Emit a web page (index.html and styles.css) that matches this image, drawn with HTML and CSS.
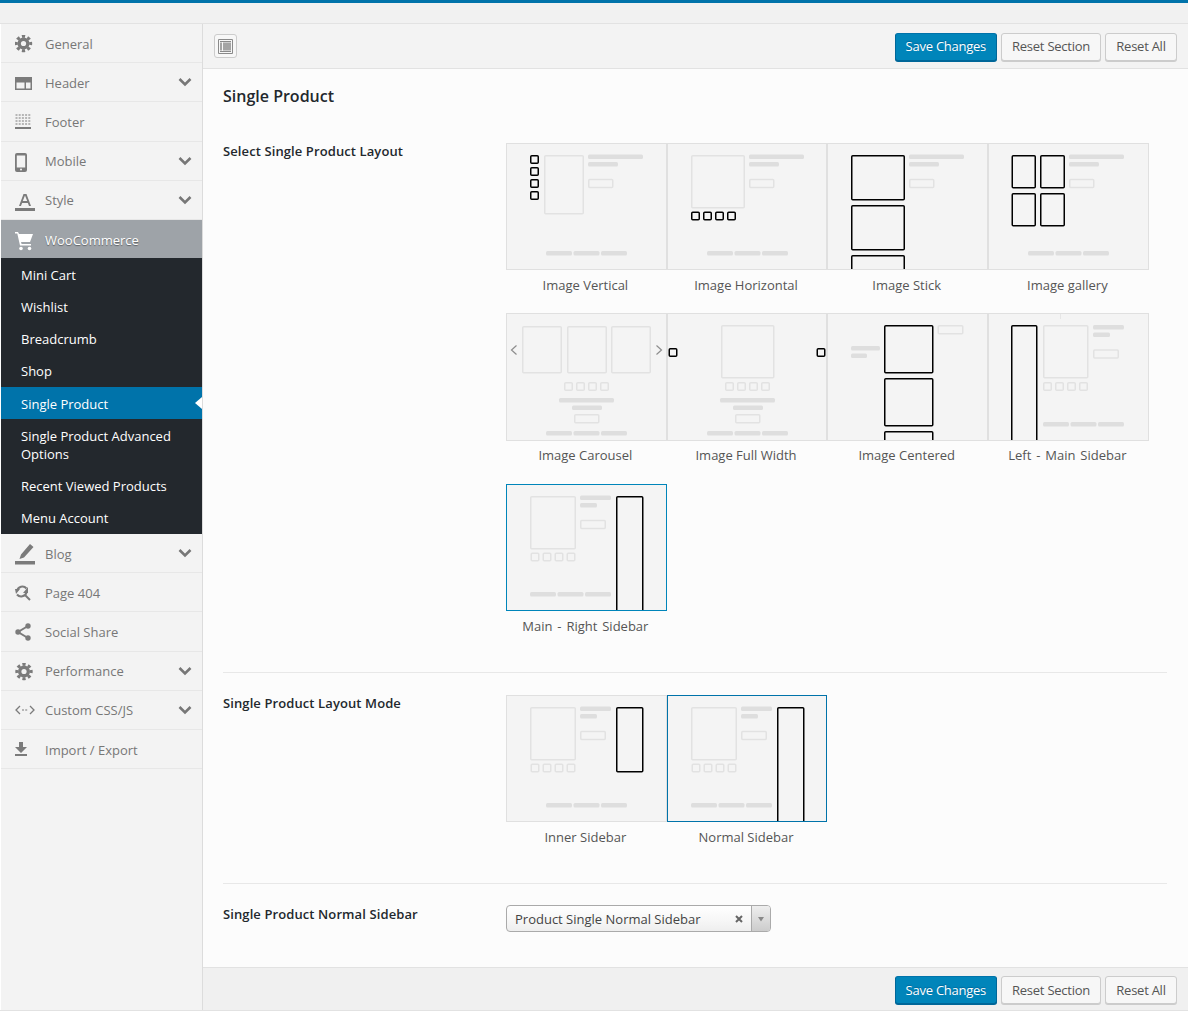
FILE: index.html
```html
<!DOCTYPE html>
<html lang="en">
<head>
<meta charset="utf-8">
<title>Theme Options</title>
<link rel="stylesheet" href="styles.css">
</head>
<body>
<svg class="defs" width="0" height="0" aria-hidden="true">
  <defs>
    <g id="foot"><rect class="ln" width="26" height="4.5"/><rect class="ln" x="27.5" width="26" height="4.5"/><rect class="ln" x="55" width="26" height="4.5"/></g>
    <g id="sq"><rect class="ol" x=".75" y=".75" width="7.5" height="7.5"/><rect class="ol" x="12.75" y=".75" width="7.5" height="7.5"/><rect class="ol" x="24.75" y=".75" width="7.5" height="7.5"/><rect class="ol" x="36.75" y=".75" width="7.5" height="7.5"/></g>
    <g id="info"><rect class="ln" width="55" height="4.5"/><rect class="ln" y="7.5" width="30" height="4.5"/><rect class="ol" x=".75" y="25" width="24" height="8"/></g>
    <g id="infos"><rect class="ln" width="31" height="4.5"/><rect class="ln" y="7.5" width="17" height="4.5"/><rect class="ol" x=".75" y="25" width="24.5" height="8"/></g>
    <g id="center"><rect class="ln" width="55" height="4.5"/><rect class="ln" x="13" y="7.5" width="30" height="4.5"/><rect class="ol" x="15.75" y="16.75" width="24" height="8"/></g>
    <g id="gear"><circle cx="0" cy="0" r="6" class="ic-f"/><circle cx="0" cy="0" r="7.2" class="ic-teeth" pathLength="48" stroke-dasharray="3.4 2.6" stroke-dashoffset="1.7"/><circle cx="0" cy="0" r="2.6" class="ic-hole"/></g>
  </defs>
</svg>
<div class="topbar"></div>
<div class="app">
  <nav class="sidebar">
    <a class="nav nav--low"><svg class="ico" viewBox="0 0 20 20"><use href="#gear" x="8.5" y="8.5"/></svg>General</a>
    <a class="nav nav--low has-sub"><svg class="ico" viewBox="0 0 20 20"><path class="ic-p" fill-rule="evenodd" d="M0 3h17v13H0zM1.500 8.500v6h8v-6zM11 8.500v6h4.500v-6z"/></svg>Header<svg class="chev" viewBox="0 0 14 10"><path d="M1.5 2L7 7.500 12.500 2"/></svg></a>
    <a class="nav nav--tall"><svg class="ico" viewBox="0 0 20 20"><path class="ic-dots" d="M.5 2H16M.5 5H16M.5 8H16M.5 11H16"/><path class="ic-p" d="M0 14h16v2H0z"/></svg>Footer</a>
    <a class="nav has-sub"><svg class="ico" viewBox="0 0 20 20"><path class="ic-p" fill-rule="evenodd" d="M2 0h8a2 2 0 0 1 2 2v15a2 2 0 0 1-2 2H2a2 2 0 0 1-2-2V2a2 2 0 0 1 2-2zM1.800 2.500v12h8.400v-12zM6 15.500a1 1 0 1 0 0 2 1 1 0 0 0 0-2z"/></svg>Mobile<svg class="chev" viewBox="0 0 14 10"><path d="M1.5 2L7 7.500 12.500 2"/></svg></a>
    <a class="nav has-sub"><svg class="ico ico--wide" viewBox="0 0 22 22"><path class="ic-p" fill-rule="evenodd" d="M8.500 3h3L16 15h-2l-1.100-3H7.100L6 15H4zM7.800 10h4.400L10 4.500zM0 17h20v3H0z"/></svg>Style<svg class="chev" viewBox="0 0 14 10"><path d="M1.5 2L7 7.500 12.500 2"/></svg></a>
    <a class="nav nav--active nav--low"><svg class="ico" viewBox="0 0 20 20"><path class="ic-w" d="M0 1h3l1 2h14l-3 8H6l.6 2H16v1.500H5L2.300 2.500H0z"/><circle class="ic-w" cx="6" cy="17.500" r="1.800"/><circle class="ic-w" cx="14.500" cy="17.500" r="1.800"/></svg>WooCommerce</a>
    <div class="subnav">
      <a class="sub">Mini Cart</a>
      <a class="sub">Wishlist</a>
      <a class="sub">Breadcrumb</a>
      <a class="sub">Shop</a>
      <a class="sub sub--active">Single Product</a>
      <a class="sub sub--long">Single Product Advanced Options</a>
      <a class="sub">Recent Viewed Products</a>
      <a class="sub">Menu Account</a>
    </div>
    <a class="nav nav--low has-sub"><svg class="ico ico--wide" viewBox="0 0 22 22"><path class="ic-p" d="M15 0l3.500 3L9 13.500 4.500 15 6 10.500zM0 17h20v3.500H0z"/></svg>Blog<svg class="chev" viewBox="0 0 14 10"><path d="M1.5 2L7 7.500 12.500 2"/></svg></a>
    <a class="nav nav--low"><svg class="ico" viewBox="0 0 20 20"><path class="ic-s ic-s--b" d="M2 7a5.500 5.500 0 0 1 9.500-2.500M11.500 8.500A5.500 5.500 0 0 1 2 10.500M10 11l5 5"/><path class="ic-p" d="M0 5h5L1 10zM13 3v6H8z"/></svg>Page 404</a>
    <a class="nav nav--tall"><svg class="ico" viewBox="0 0 20 20"><path class="ic-s ic-s--b" d="M13 3L3 9l10 6"/><circle class="ic-p" cx="13" cy="3" r="2.700"/><circle class="ic-p" cx="3" cy="9" r="2.700"/><circle class="ic-p" cx="13" cy="15" r="2.700"/></svg>Social Share</a>
    <a class="nav has-sub"><svg class="ico" viewBox="0 0 20 20"><use href="#gear" x="9" y="8.500"/></svg>Performance<svg class="chev" viewBox="0 0 14 10"><path d="M1.5 2L7 7.500 12.500 2"/></svg></a>
    <a class="nav has-sub"><svg class="ico ico--wide" viewBox="0 0 22 22"><path class="ic-s ic-s--thin" d="M5 5l-4 4 4 4M15 5l4 4-4 4"/><path class="ic-dots" d="M7 9h6"/></svg>Custom CSS/JS<svg class="chev" viewBox="0 0 14 10"><path d="M1.5 2L7 7.500 12.500 2"/></svg></a>
    <a class="nav nav--low"><svg class="ico" viewBox="0 0 20 20"><path class="ic-p" d="M4 1h4v5h4L6 12 0 6h4zM0 13h12v2H0z"/></svg>Import / Export</a>
  </nav>
  <main class="main">
    <header class="bar bar--top">
      <button class="expand" aria-label="Expand"><svg viewBox="0 0 15 15" width="15" height="15"><path class="exp-line" d="M.5.500h14v14H.5zM2 2.500h11M2 12.500h11"/><path class="exp-fill" d="M2 3.500h2v8H2zM5 3.500h8v8H5z"/></svg></button>
      <div class="actions">
        <button class="btn btn--primary">Save Changes</button>
        <button class="btn">Reset Section</button>
        <button class="btn btn--all">Reset All</button>
      </div>
    </header>
    <section class="content">
      <h2 class="title">Single Product</h2>
      <div class="field field--first">
        <div class="label">Select Single Product Layout</div>
        <div class="options">
          <div class="opt"><div class="thumb"><svg>
            <rect class="bk" x="24.75" y="12.750" width="7.500" height="7.500"/><rect class="bk" x="24.75" y="24.750" width="7.500" height="7.500"/><rect class="bk" x="24.75" y="36.750" width="7.500" height="7.500"/><rect class="bk" x="24.75" y="48.750" width="7.500" height="7.500"/>
            <rect class="ol" x="38.750" y="12.750" width="38.500" height="58"/>
            <use href="#info" x="82" y="11.500"/><use href="#foot" x="40" y="108"/>
          </svg></div><div class="cap">Image Vertical</div></div>
          <div class="opt"><div class="thumb"><svg>
            <rect class="ol" x="24.750" y="12.750" width="52.500" height="52"/>
            <rect class="bk" x="24.75" y="69.250" width="7.500" height="7.500"/><rect class="bk" x="36.75" y="69.250" width="7.500" height="7.500"/><rect class="bk" x="48.75" y="69.250" width="7.500" height="7.500"/><rect class="bk" x="60.75" y="69.250" width="7.500" height="7.500"/>
            <use href="#info" x="82" y="11.500"/><use href="#foot" x="40" y="108"/>
          </svg></div><div class="cap">Image Horizontal</div></div>
          <div class="opt"><div class="thumb"><svg>
            <rect class="bk" x="24.750" y="12.750" width="52.500" height="44"/><rect class="bk" x="24.750" y="62.750" width="52.500" height="44"/><rect class="bk" x="24.750" y="112.750" width="52.500" height="44"/>
            <use href="#info" x="82" y="11.500"/>
          </svg></div><div class="cap">Image Stick</div></div>
          <div class="opt"><div class="thumb"><svg>
            <rect class="bk" x="24.250" y="12.750" width="23" height="32"/><rect class="bk" x="52.750" y="12.750" width="23.500" height="32"/><rect class="bk" x="24.250" y="50.750" width="23" height="32"/><rect class="bk" x="52.750" y="50.750" width="23.500" height="32"/>
            <use href="#info" x="81" y="11.500"/><use href="#foot" x="40" y="108"/>
          </svg></div><div class="cap">Image gallery</div></div>

          <div class="opt opt--tall"><div class="thumb"><svg>
            <rect class="ol" x="16.750" y="13.750" width="38.500" height="46"/><rect class="ol" x="61.750" y="13.750" width="38.500" height="46"/><rect class="ol" x="105.750" y="13.750" width="38.500" height="46"/>
            <path class="arr" d="M10.500 32.500L5.500 37l5 4.500M150.500 32.500l5 4.500-5 4.500"/>
            <use href="#sq" x="58" y="69"/><use href="#center" x="53" y="85"/><use href="#foot" x="40" y="118"/>
          </svg></div><div class="cap">Image Carousel</div></div>
          <div class="opt opt--tall"><div class="thumb"><svg>
            <rect class="bk" x="2.250" y="35.750" width="7.500" height="7.500"/><rect class="bk" x="150.250" y="35.750" width="7.500" height="7.500"/>
            <rect class="ol" x="54.750" y="12.750" width="52" height="52"/>
            <use href="#sq" x="58" y="69"/><use href="#center" x="53" y="85"/><use href="#foot" x="40" y="118"/>
          </svg></div><div class="cap">Image Full Width</div></div>
          <div class="opt opt--tall"><div class="thumb"><svg>
            <rect class="bk" x="57.750" y="12.750" width="48" height="47"/><rect class="bk" x="57.750" y="65.750" width="48" height="47"/><rect class="bk" x="57.750" y="118.750" width="48" height="47"/>
            <rect class="ol" x="111.250" y="12.750" width="24.500" height="8"/>
            <rect class="ln" x="24" y="33" width="29" height="4.500"/><rect class="ln" x="24" y="40.500" width="16" height="4.500"/>
          </svg></div><div class="cap">Image Centered</div></div>
          <div class="opt opt--tall"><div class="thumb"><svg>
            <rect class="tick" x="72" y="1" width="1" height="5"/>
            <rect class="bk" x="23.750" y="12.750" width="25" height="130"/>
            <rect class="ol" x="55.750" y="12.750" width="44" height="52"/>
            <use href="#sq" x="55" y="69"/><use href="#infos" x="105" y="12"/><use href="#foot" x="55" y="109"/>
          </svg></div><div class="cap cap--dash">Left - Main Sidebar</div></div>

          <div class="opt"><div class="thumb thumb--on"><svg>
            <rect class="ol" x="24.750" y="12.750" width="44.500" height="52"/>
            <use href="#sq" x="24.500" y="68.500"/><use href="#infos" x="74" y="11.500"/><use href="#foot" x="24" y="108"/>
            <rect class="bk" x="110.750" y="12.750" width="26" height="130"/>
          </svg></div><div class="cap cap--dash">Main - Right Sidebar</div></div>
        </div>
      </div>
      <div class="field">
        <div class="label">Single Product Layout Mode</div>
        <div class="options">
          <div class="opt"><div class="thumb"><svg>
            <rect class="ol" x="24.750" y="12.750" width="44.500" height="52"/>
            <use href="#sq" x="24.500" y="68.500"/><use href="#infos" x="74" y="11.500"/><use href="#foot" x="40" y="108"/>
            <rect class="bk" x="110.750" y="12.750" width="26" height="64"/>
          </svg></div><div class="cap">Inner Sidebar</div></div>
          <div class="opt"><div class="thumb thumb--sel"><svg>
            <rect class="ol" x="24.750" y="12.750" width="44.500" height="52"/>
            <use href="#sq" x="24.500" y="68.500"/><use href="#infos" x="74" y="11.500"/><use href="#foot" x="24" y="108"/>
            <rect class="bk" x="110.750" y="12.750" width="26" height="130"/>
          </svg></div><div class="cap">Normal Sidebar</div></div>
        </div>
      </div>
      <div class="field field--select">
        <div class="label">Single Product Normal Sidebar</div>
        <div class="select">
          <span class="select-text">Product Single Normal Sidebar</span>
          <svg class="select-x" viewBox="0 0 8 8" width="8" height="8"><path d="M1 1l6 6M7 1L1 7"/></svg>
          <span class="select-arrow"><svg viewBox="0 0 8 6" width="8" height="6"><path d="M1 1h6L4 5.500z"/></svg></span>
        </div>
      </div>
    </section>
    <footer class="bar bar--bottom">
      <div class="actions">
        <button class="btn btn--primary">Save Changes</button>
        <button class="btn">Reset Section</button>
        <button class="btn btn--all">Reset All</button>
      </div>
    </footer>
  </main>
</div>
</body>
</html>
```
FILE: styles.css
```css
* { box-sizing: border-box; }
html, body { margin: 0; height: 100%; overflow: hidden; }
body {
  font-family: "Open Sans", "Noto Sans", sans-serif;
  font-size: 13px;
  color: #444;
  background: #f1f1f1;
  display: flex;
  flex-direction: column;
}
.defs { display: block; height: 0; width: 0; }
.topbar {
  height: 24px;
  flex: none;
  border-top: 3px solid #0073aa;
  border-bottom: 1px solid #e2e2e2;
  background: #f1f1f1;
}
.app {
  flex: 1;
  min-height: 0;
  display: flex;
  padding-left: 1px;
  background: #fff;
  border-bottom: 1px solid #e2e2e2;
}

/* sidebar */
.sidebar {
  width: 202px;
  flex: none;
  background: #f3f3f3;
  border-right: 1px solid #dcdcdc;
}
.nav {
  height: 39px;
  display: flex;
  align-items: center;
  padding-left: 14px;
  color: #777;
  border-bottom: 1px solid #e7e7e7;
}
.nav--tall { height: 40px; }
.nav--low { padding-top: 1px; }
.has-sub { position: relative; }
.ico { width: 20px; height: 20px; margin: 3px 10px 0 0; flex: none; }
.ico--wide { width: 22px; height: 22px; margin-right: 8px; }
.ic-p, .ic-f { fill: #7b7b7b; }
.ic-teeth { fill: none; stroke: #7b7b7b; stroke-width: 3; }
.ic-hole { fill: #f3f3f3; }
.ic-w { fill: #fff; }
.ic-s { fill: none; stroke: #7b7b7b; stroke-width: 1.6; }
.ic-s--b { stroke-width: 2; }
.ic-s--thin { stroke-width: 1.300; }
.ic-dots { fill: none; stroke: #7b7b7b; stroke-width: 1.2; stroke-dasharray: 2 1.2; }
.chev { position: absolute; right: 10px; top: 14px; width: 14px; height: 10px; }
.chev path { fill: none; stroke: #777; stroke-width: 2.6; }
.nav--active {
  height: 38px;
  background: #9ea3a8;
  color: #fff;
  border-bottom: 0;
  text-shadow: 0 1px 1px rgba(0, 0, 0, .4);
}
.subnav { background: #23282d; padding-top: 1px; }
.sub {
  display: block;
  position: relative;
  padding: 7px 20px;
  line-height: 18px;
  color: #fff;
}
.sub--long { padding-top: 8px; }
.sub--active { background: #0073aa; padding-top: 8px; padding-bottom: 6px; }
.sub--active::after {
  content: "";
  position: absolute;
  right: 0;
  top: 10px;
  border: 6px solid transparent;
  border-left-width: 0;
  border-right: 7px solid #fff;
}

/* main */
.main {
  flex: 1;
  min-width: 0;
  display: flex;
  flex-direction: column;
  background: #fcfcfc;
}
.bar { background: #f3f3f3; display: flex; flex: none; padding: 9px 11px 0; }
.bar--top { height: 45px; border-bottom: 1px solid #e2e2e2; justify-content: space-between; }
.bar--bottom { height: 43px; padding-top: 8px; border-top: 1px solid #e2e2e2; justify-content: flex-end; background: #f0f0f0; }
.actions { display: flex; gap: 4px; }
.expand {
  width: 23px;
  height: 24px;
  margin-top: 1px;
  padding: 0;
  display: flex;
  align-items: center;
  justify-content: center;
  background: #f7f7f7;
  border: 1px solid #ccc;
  border-radius: 3px;
}
.exp-line { fill: none; stroke: #8a8a8a; stroke-width: 1; }
.exp-fill { fill: #a4a4a4; }
.btn {
  height: 28px;
  padding: 0 10px 2px;
  font: 13px/24px "Open Sans", "Noto Sans", sans-serif;
  letter-spacing: -.25px;
  color: #555;
  background: #f7f7f7;
  border: 1px solid #ccc;
  border-radius: 3px;
  box-shadow: 0 1px 0 #ccc;
}
.btn--all { min-width: 72px; }
.bar--bottom .btn { padding-bottom: 0; }
.btn--primary {
  color: #fff;
  background: #0085ba;
  border-color: #0073aa #006799 #006799;
  box-shadow: 0 1px 0 #006799;
  text-shadow: 0 -1px 1px #006799;
}

/* content */
.content { flex: 1; min-height: 0; padding: 15px 21px 0 20px; }
.title { margin: 0 0 35px; font-size: 16px; line-height: 24px; font-weight: 600; color: #23282d; }
.field {
  display: grid;
  grid-template-columns: 283px 1fr;
  padding: 22px 0 37px;
  border-top: 1px solid #e8e8e8;
}
.field--first { padding-top: 0; border-top: 0; }
.field--select { padding-top: 21px; padding-bottom: 0; }
.label { font-weight: 600; line-height: 16px; letter-spacing: .1px; color: #23282d; }
.field--select .label { margin-top: 1px; }
.options { display: grid; grid-template-columns: repeat(4, 160.7px); row-gap: 19px; }
.thumb {
  height: 127px;
  background: #f4f4f4;
  border: 1px solid #e0e0e0;
  overflow: hidden;
}
.thumb svg { display: block; margin: -1px; width: 162px; height: 130px; }
.thumb--on { border-color: #0085ba; }
.thumb--sel { border-color: #0073aa; }
.opt--tall { margin-bottom: 1px; }
.opt--tall .thumb { height: 128px; }
.opt--tall .cap { margin-top: 5px; }
.cap { margin-top: 6px; padding-right: 2px; line-height: 18px; text-align: center; color: #555; }
.cap--dash { word-spacing: 1.5px; }
.ln { fill: #dedede; rx: 1.5px; }
.ol { fill: none; stroke: #e2e2e2; stroke-width: 1.500; rx: 1px; }
.bk { fill: none; stroke: #000; stroke-width: 1.500; rx: 1px; }
.tick { fill: #e6e6e6; }
.arr { fill: none; stroke: #8d8d8d; stroke-width: 1.200; }
.select {
  width: 265px;
  height: 27px;
  display: flex;
  align-items: center;
  padding-left: 8px;
  border: 1px solid #aaa;
  border-radius: 4px;
  background: linear-gradient(#fff, #f6f6f6 60%, #eee);
  color: #444;
}
.select-text { flex: 1; }
.select-x { margin-right: 8px; }
.select-x path { fill: none; stroke: #666; stroke-width: 2; }
.select-arrow {
  width: 19px;
  align-self: stretch;
  display: flex;
  align-items: center;
  justify-content: center;
  border-left: 1px solid #aaa;
  border-radius: 0 3px 3px 0;
  background: linear-gradient(#eee, #ccc);
}
.select-arrow path { fill: #888; }
```
